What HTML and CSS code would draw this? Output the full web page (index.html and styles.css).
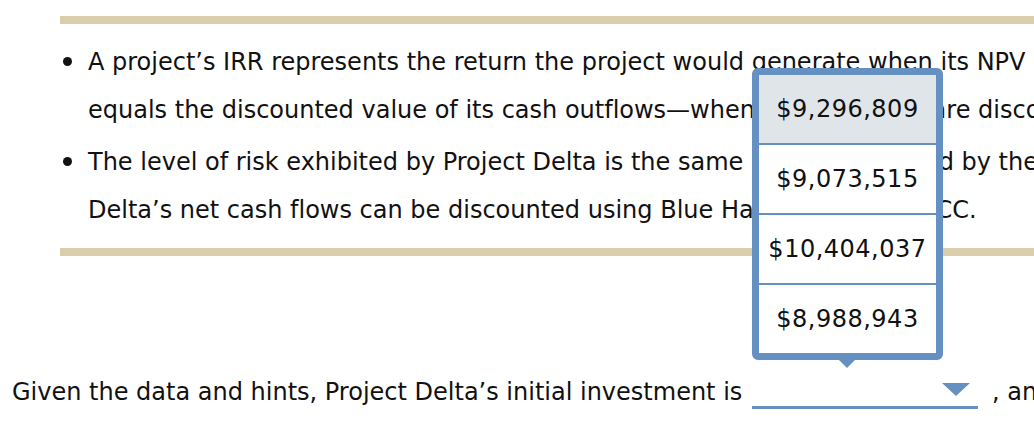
FILE: index.html
```html
<!DOCTYPE html>
<html>
<head>
<meta charset="utf-8">
<link rel="stylesheet" href="styles.css">
</head>
<body>
<div class="panel">
  <ul class="hints">
    <li><span class="txt">A project’s IRR represents the return the project would generate when its NPV is zero or the discounted value of its cash inflows<br>equals the discounted value of its cash outflows—when its cash flows are discounted using the project’s IRR.</span></li>
    <li><span class="txt">The level of risk exhibited by Project Delta is the same as that exhibited by the company’s average project, which means that Project<br>Delta’s net cash flows can be discounted using Blue Hamster’s 8% WACC.</span></li>
  </ul>
</div>
<p class="question">Given the data and hints, Project Delta’s initial investment is <span class="select"><span class="caret"></span><span class="popup"><span class="opt active">$9,296,809</span><span class="opt">$9,073,515</span><span class="opt">$10,404,037</span><span class="opt">$8,988,943</span></span></span><span class="after">, and</span> the project’s IRR is</p>
</body>
</html>
```

FILE: styles.css
```css
html, body {
  margin: 0;
  padding: 0;
  overflow: hidden;
  background: #fff;
}
body {
  font-family: "DejaVu Sans", Verdana, sans-serif;
  font-size: 24px;
  font-variant-ligatures: none;
  color: #111;
  width: 1034px;
  height: 438px;
}
.panel {
  margin: 16px 0 0 60px;
  border-top: 8px solid #d9cfab;
  border-bottom: 8px solid #d9cfab;
  padding: 14px 0;
}
.hints {
  list-style: none;
  margin: 0;
  padding: 0;
  display: flex;
  flex-direction: column;
  gap: 4px;
}
.hints li {
  display: flex;
  align-items: flex-start;
  line-height: 48px;
  white-space: nowrap;
}
.hints li::before {
  content: "";
  flex: none;
  width: 9px;
  height: 9px;
  border-radius: 50%;
  background: #111;
  margin: 19px 16px 0 3px;
}
.question {
  margin: 112px 0 0 12px;
  line-height: 48px;
  white-space: nowrap;
}
.select {
  display: inline-block;
  position: relative;
  width: 226px;
  height: 30px;
  margin-left: 2px;
  border-bottom: 3px solid #6591c2;
  vertical-align: -9px;
}
.caret {
  position: absolute;
  right: 8px;
  top: 7px;
  width: 0;
  height: 0;
  border-left: 14px solid transparent;
  border-right: 14px solid transparent;
  border-top: 13px solid #6591c2;
}
.after {
  margin-left: 14px;
}
.popup {
  position: absolute;
  left: 0;
  bottom: 46px;
  width: 177px;
  border: 7px solid #6591c2;
  border-radius: 6px;
  display: flex;
  flex-direction: column;
  gap: 2px;
  background: #6591c2;
}
.popup::after {
  content: "";
  position: absolute;
  left: 50%;
  top: 100%;
  margin-left: -14px;
  margin-top: 1px;
  border-left: 14px solid transparent;
  border-right: 14px solid transparent;
  border-top: 14px solid #6591c2;
}
.opt {
  display: flex;
  align-items: center;
  justify-content: center;
  height: 68px;
  background: #fff;
  color: #111;
  letter-spacing: 0.5px;
}
.opt.active {
  background: #dfe5e8;
}
```
